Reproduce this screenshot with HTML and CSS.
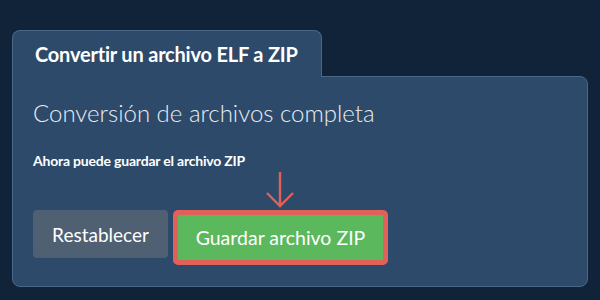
FILE: index.html
```html
<!DOCTYPE html>
<html lang="es">
<head>
  <meta charset="UTF-8" />
  <title>Convertir ELF a ZIP</title>
  <link rel="stylesheet" href="styles.css">
</head>
<body>

  <div class="converter">
    <div class="tab">Convertir un archivo ELF a ZIP</div>
    <div class="panel">
      <h1 class="done-title">Conversión de archivos completa</h1>
      <p class="done-msg">Ahora puede guardar el archivo ZIP</p>

      <div class="actions">
        <button class="btn btn-reset">Restablecer</button>
        <div class="save-wrap">
          <svg class="arrow" width="30" height="37" viewBox="0 0 30 37">
            <path d="M15 1 V35 M2 22 L15 35 L28 22" fill="none" stroke="#e0605a" stroke-width="2.4" />
          </svg>
          <button class="btn btn-save">Guardar archivo ZIP</button>
        </div>
      </div>
    </div>
  </div>

</body>
</html>
```

FILE: styles.css
```css
* { margin: 0; padding: 0; box-sizing: border-box; font-family: 'Lato', 'Open Sans', sans-serif; }
body { background: #102338; padding: 30px 12px 0 12px; width: 600px; height: 300px; overflow: hidden; }

.converter { width: 576px; }

.tab {
  width: 310px; height: 47px; background: #2d4a6a; color: white;
  border: 1px solid #4b6786; border-bottom: none; border-radius: 8px 8px 0 0;
  padding: 11px 0 0 22px; font-size: 20px; font-weight: bold; letter-spacing: -0.2px;
  position: relative; z-index: 1; margin-bottom: -1px;
}

.panel {
  height: 211px; background: #2d4a6a; color: white;
  border: 1px solid #4b6786; border-radius: 0 8px 8px 8px;
  padding: 21px 20px 0 20px;
}

.done-title { font-size: 24px; font-weight: 300; color: #e8edf2; line-height: 30px; }
.done-msg { font-size: 14px; font-weight: bold; margin-top: 24px; letter-spacing: -0.2px; }

.actions { display: flex; align-items: flex-start; gap: 5px; margin-top: 41px; }

.btn {
  height: 48px; border: none; border-radius: 4px; color: white; white-space: nowrap;
  font-size: 19px; font-weight: normal; padding: 0 10px;
}
.btn-reset { background: #4f6072; width: 135px; }

.save-wrap { position: relative; }
.arrow { position: absolute; left: 92px; top: -39px; }
.btn-save {
  background: #5cb85c; height: 55px; width: 215px; font-size: 19.5px;
  border: 5px solid #e0605a; border-radius: 5px;
}
```
